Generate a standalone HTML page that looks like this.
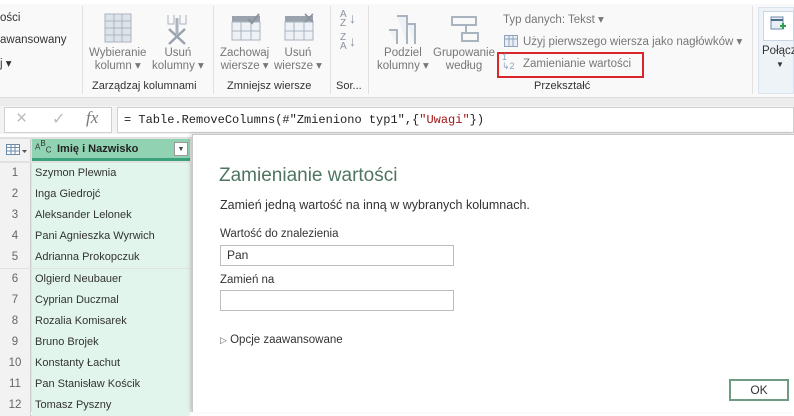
<!DOCTYPE html>
<html><head><meta charset="utf-8"><style>
*{margin:0;padding:0;box-sizing:border-box}
body{width:794px;height:412px;overflow:hidden;background:#fff;font-family:"Liberation Sans","DejaVu Sans",sans-serif;position:relative;color:#444}
.a{position:absolute;white-space:nowrap}
.rib{left:0;top:0;width:794px;height:97px;background:#f9f9f9;border-top:4px solid #fff}
.sep{position:absolute;top:6px;width:1px;height:88px;background:#e1e1e1}
.t{font-size:11.5px;color:#777}
.g{font-size:11.5px;color:#333}
.row{position:absolute;left:0;width:190px;height:21px;border-bottom:1px solid #d6e0da}
.row .n{position:absolute;left:0;top:0;width:31px;height:21px;background:#f2f2f2;border-right:1px solid #cfcfcf;text-align:center;font-size:11.5px;line-height:21px;color:#666}
.row .v{position:absolute;left:32px;top:0;width:158px;height:21px;background:#e1f5ec;font-size:11px;line-height:21px;padding-left:3px;color:#333}
.inp{position:absolute;left:220px;width:234px;height:21px;border:1px solid #bdbdbd;background:#fff;font-size:12px;line-height:19px;padding-left:6px;color:#333}
</style></head><body>
<div class="a rib"></div>
<div class="a g" style="left:0;top:12px">ości</div>
<div class="a g" style="left:0;top:34px">awansowany</div>
<div class="a g" style="left:0;top:56px">j ▾</div>
<div class="sep" style="left:82px"></div>
<div class="sep" style="left:213px"></div>
<div class="sep" style="left:330px"></div>
<div class="sep" style="left:368px"></div>
<div class="sep" style="left:752px"></div>
<svg class="a" style="left:100px;top:12px" width="36" height="34"><rect x="5" y="2" width="26" height="28" fill="#dde3ea" stroke="#aab4bf"/><path d="M5 9H31M5 16H31M5 23H31M14 2V30M22 2V30" stroke="#aab4bf"/></svg>
<svg class="a" style="left:162px;top:12px" width="30" height="34"><path d="M6 3V12H12V3M18 3V12H24V3" stroke="#aab4bf" fill="none"/><path d="M15 6V22" stroke="#aab4bf" stroke-width="3"/><path d="M7 17L23 32M23 17L7 32" stroke="#9aa3ad" stroke-width="2.5"/></svg>
<svg class="a" style="left:229px;top:12px" width="34" height="34"><rect x="3" y="4" width="28" height="6" fill="#9aa3ad"/><rect x="3" y="10" width="28" height="18" fill="#eef2f6" stroke="#aab4bf"/><path d="M3 19H31M12 10V28M22 10V28" stroke="#aab4bf"/><path d="M19 7L23 11L30 2" stroke="#8a939d" stroke-width="2" fill="none"/></svg>
<svg class="a" style="left:282px;top:12px" width="34" height="34"><rect x="3" y="4" width="28" height="6" fill="#9aa3ad"/><rect x="3" y="10" width="28" height="18" fill="#eef2f6" stroke="#aab4bf"/><path d="M3 19H31M12 10V28M22 10V28" stroke="#aab4bf"/><path d="M23 2L31 10M31 2L23 10" stroke="#8a939d" stroke-width="1.6"/></svg>
<div class="a" style="left:340px;top:10px;font-size:10px;line-height:9px;color:#8a939d">A<br>Z</div><div class="a" style="left:349px;top:10px;font-size:14px;color:#8a939d">↓</div>
<div class="a" style="left:340px;top:33px;font-size:10px;line-height:9px;color:#8a939d">Z<br>A</div><div class="a" style="left:349px;top:33px;font-size:14px;color:#8a939d">↓</div>
<svg class="a" style="left:385px;top:10px" width="34" height="36"><path d="M4 20H12V34M12 6H22V34M22 14H30V34" stroke="#aab4bf" fill="#eef2f6" stroke-width="2"/></svg>
<svg class="a" style="left:448px;top:14px" width="34" height="30"><rect x="4" y="3" width="24" height="8" fill="none" stroke="#aab4bf" stroke-width="2"/><rect x="14" y="19" width="16" height="8" fill="none" stroke="#aab4bf" stroke-width="2"/><path d="M18 11V19" stroke="#aab4bf" stroke-width="2"/></svg>
<div class="a t" style="left:89px;top:47px;text-align:center;line-height:13px">Wybieranie<br>kolumn ▾</div>
<div class="a t" style="left:152px;top:47px;text-align:center;line-height:13px">Usuń<br>kolumny ▾</div>
<div class="a t" style="left:220px;top:47px;text-align:center;line-height:13px">Zachowaj<br>wiersze ▾</div>
<div class="a t" style="left:274px;top:47px;text-align:center;line-height:13px">Usuń<br>wiersze ▾</div>
<div class="a t" style="left:377px;top:47px;text-align:center;line-height:13px">Podziel<br>kolumny ▾</div>
<div class="a t" style="left:433px;top:47px;text-align:center;line-height:13px">Grupowanie<br>według</div>
<div class="a g" style="left:92px;top:80px;font-size:11px">Zarządzaj kolumnami</div>
<div class="a g" style="left:227px;top:80px;font-size:11px">Zmniejsz wiersze</div>
<div class="a g" style="left:336px;top:80px;font-size:11px">Sor...</div>
<div class="a g" style="left:534px;top:80px;font-size:11px">Przekształć</div>
<div class="a t" style="left:503px;top:12px">Typ danych: Tekst ▾</div>
<svg class="a" style="left:504px;top:35px" width="14" height="12"><rect x=".5" y=".5" width="13" height="11" fill="#e8eef5" stroke="#8fa4bb"/><path d="M1 4H13M5 1V12M9 1V12" stroke="#8fa4bb"/></svg>
<div class="a t" style="left:523px;top:34px">Użyj pierwszego wiersza jako nagłówków ▾</div>
<div class="a" style="left:497px;top:52px;width:147px;height:26px;border:2px solid #d9262c"></div>
<div class="a" style="left:502px;top:53px;font-size:9px;color:#8fa4bb;line-height:9px">1<br>↳2</div>
<div class="a t" style="left:523px;top:58px">Zamienianie wartości</div>
<div class="a" style="left:758px;top:7px;width:36px;height:87px;background:#eef3f8;border:1px solid #dbe4ee"></div>
<div class="a" style="left:763px;top:11px;width:31px;height:30px;background:#fff;border:1px solid #c9d6e3"></div>
<svg class="a" style="left:770px;top:16px" width="16" height="16"><rect x="1" y="1" width="12" height="12" fill="#e8eef5" stroke="#6b8aa8"/><path d="M1 4H13" stroke="#4a6b8a" stroke-width="2"/><path d="M10 10H16M13 7V13" stroke="#2e9e4f" stroke-width="2"/></svg>
<div class="a g" style="left:762px;top:45px;font-size:11.5px">Połącz</div>
<div class="a" style="left:776px;top:60px;font-size:8px;color:#333">▼</div>
<div class="a" style="left:0;top:97px;width:794px;height:9px;background:#ececec;border-top:1px solid #ddd"></div>
<div class="a" style="left:0;top:106px;width:794px;height:28px;background:#f3f3f3"></div>
<div class="a" style="left:4px;top:107px;width:108px;height:26px;background:#fff;border:1px solid #d0d0d0"></div>
<div class="a" style="left:16px;top:108px;font-size:19px;color:#bbb">×</div>
<div class="a" style="left:52px;top:109px;font-size:16px;color:#bbb">✓</div>
<div class="a" style="left:86px;top:108px;font-size:17px;color:#777;font-family:'Liberation Serif',serif;font-style:italic">fx</div>
<div class="a" style="left:117px;top:107px;width:677px;height:26px;background:#fff;border:1px solid #d0d0d0"></div>
<div class="a" style="left:124px;top:113px;font-family:'Liberation Mono',monospace;font-size:12px;color:#222">= Table.RemoveColumns(#"Zmieniono typ1",{<span style="color:#a31515">"Uwagi"</span>})</div>
<div class="a" style="left:0;top:137px;width:194px;height:275px;background:#e1e1e1"></div>
<div class="a" style="left:0;top:139px;width:31px;height:22px;background:#f2f2f2;border-right:1px solid #cfcfcf"></div>
<svg class="a" style="left:6px;top:144px" width="22" height="12"><rect x=".5" y=".5" width="13" height="10" fill="#fff" stroke="#6b8aa8"/><path d="M1 3.5H13M1 7H13M5 1V11M9 1V11" stroke="#6b8aa8"/><path d="M16 6H21L18.5 9Z" fill="#555"/></svg>
<div class="a" style="left:32px;top:139px;width:158px;height:22px;background:#91d2b2;border-bottom:3px solid #3aa37b"></div>
<div class="a" style="left:35px;top:140px;font-size:8px;color:#333;line-height:8px">A<sup style="font-size:8px">B</sup><sub style="font-size:8px">C</sub></div>
<div class="a" style="left:57px;top:143px;font-size:11px;color:#222;font-weight:bold">Imię i Nazwisko</div>
<div class="a" style="left:174px;top:142px;width:14px;height:14px;background:#fff;border:1px solid #999;font-size:7px;text-align:center;line-height:13px;color:#444">▼</div>
<div class="row" style="top:163px"><div class="n">1</div><div class="v">Szymon Plewnia</div></div>
<div class="row" style="top:184px"><div class="n">2</div><div class="v">Inga Giedrojć</div></div>
<div class="row" style="top:205px"><div class="n">3</div><div class="v">Aleksander Lelonek</div></div>
<div class="row" style="top:226px"><div class="n">4</div><div class="v">Pani Agnieszka Wyrwich</div></div>
<div class="row" style="top:247px"><div class="n">5</div><div class="v">Adrianna Prokopczuk</div></div>
<div class="row" style="top:269px"><div class="n">6</div><div class="v">Olgierd Neubauer</div></div>
<div class="row" style="top:290px"><div class="n">7</div><div class="v">Cyprian Duczmal</div></div>
<div class="row" style="top:311px"><div class="n">8</div><div class="v">Rozalia Komisarek</div></div>
<div class="row" style="top:332px"><div class="n">9</div><div class="v">Bruno Brojek</div></div>
<div class="row" style="top:353px"><div class="n">10</div><div class="v">Konstanty Łachut</div></div>
<div class="row" style="top:374px"><div class="n">11</div><div class="v">Pan Stanisław Kościk</div></div>
<div class="row" style="top:395px"><div class="n">12</div><div class="v">Tomasz Pyszny</div></div>
<div class="a" style="left:192px;top:134px;width:602px;height:278px;background:#fff;border-left:1px solid #c8c8c8;border-top:1px solid #c8c8c8;box-shadow:-2px -1px 4px rgba(0,0,0,.12)"></div>
<div class="a" style="left:219px;top:165px;font-size:19px;color:#4f7562">Zamienianie wartości</div>
<div class="a" style="left:220px;top:198px;font-size:12.5px;color:#333">Zamień jedną wartość na inną w wybranych kolumnach.</div>
<div class="a" style="left:220px;top:228px;font-size:11.5px;color:#333">Wartość do znalezienia</div>
<div class="inp" style="top:245px">Pan</div>
<div class="a" style="left:220px;top:274px;font-size:11.5px;color:#333">Zamień na</div>
<div class="inp" style="top:290px"></div>
<div class="a" style="left:220px;top:334px;font-size:11.5px;color:#333"><span style="font-size:9px;color:#666">▷</span> Opcje zaawansowane</div>
<div class="a" style="left:729px;top:379px;width:60px;height:22px;border:2px solid #6f9a83;font-size:12px;text-align:center;line-height:18px;color:#333">OK</div>
</body></html>
